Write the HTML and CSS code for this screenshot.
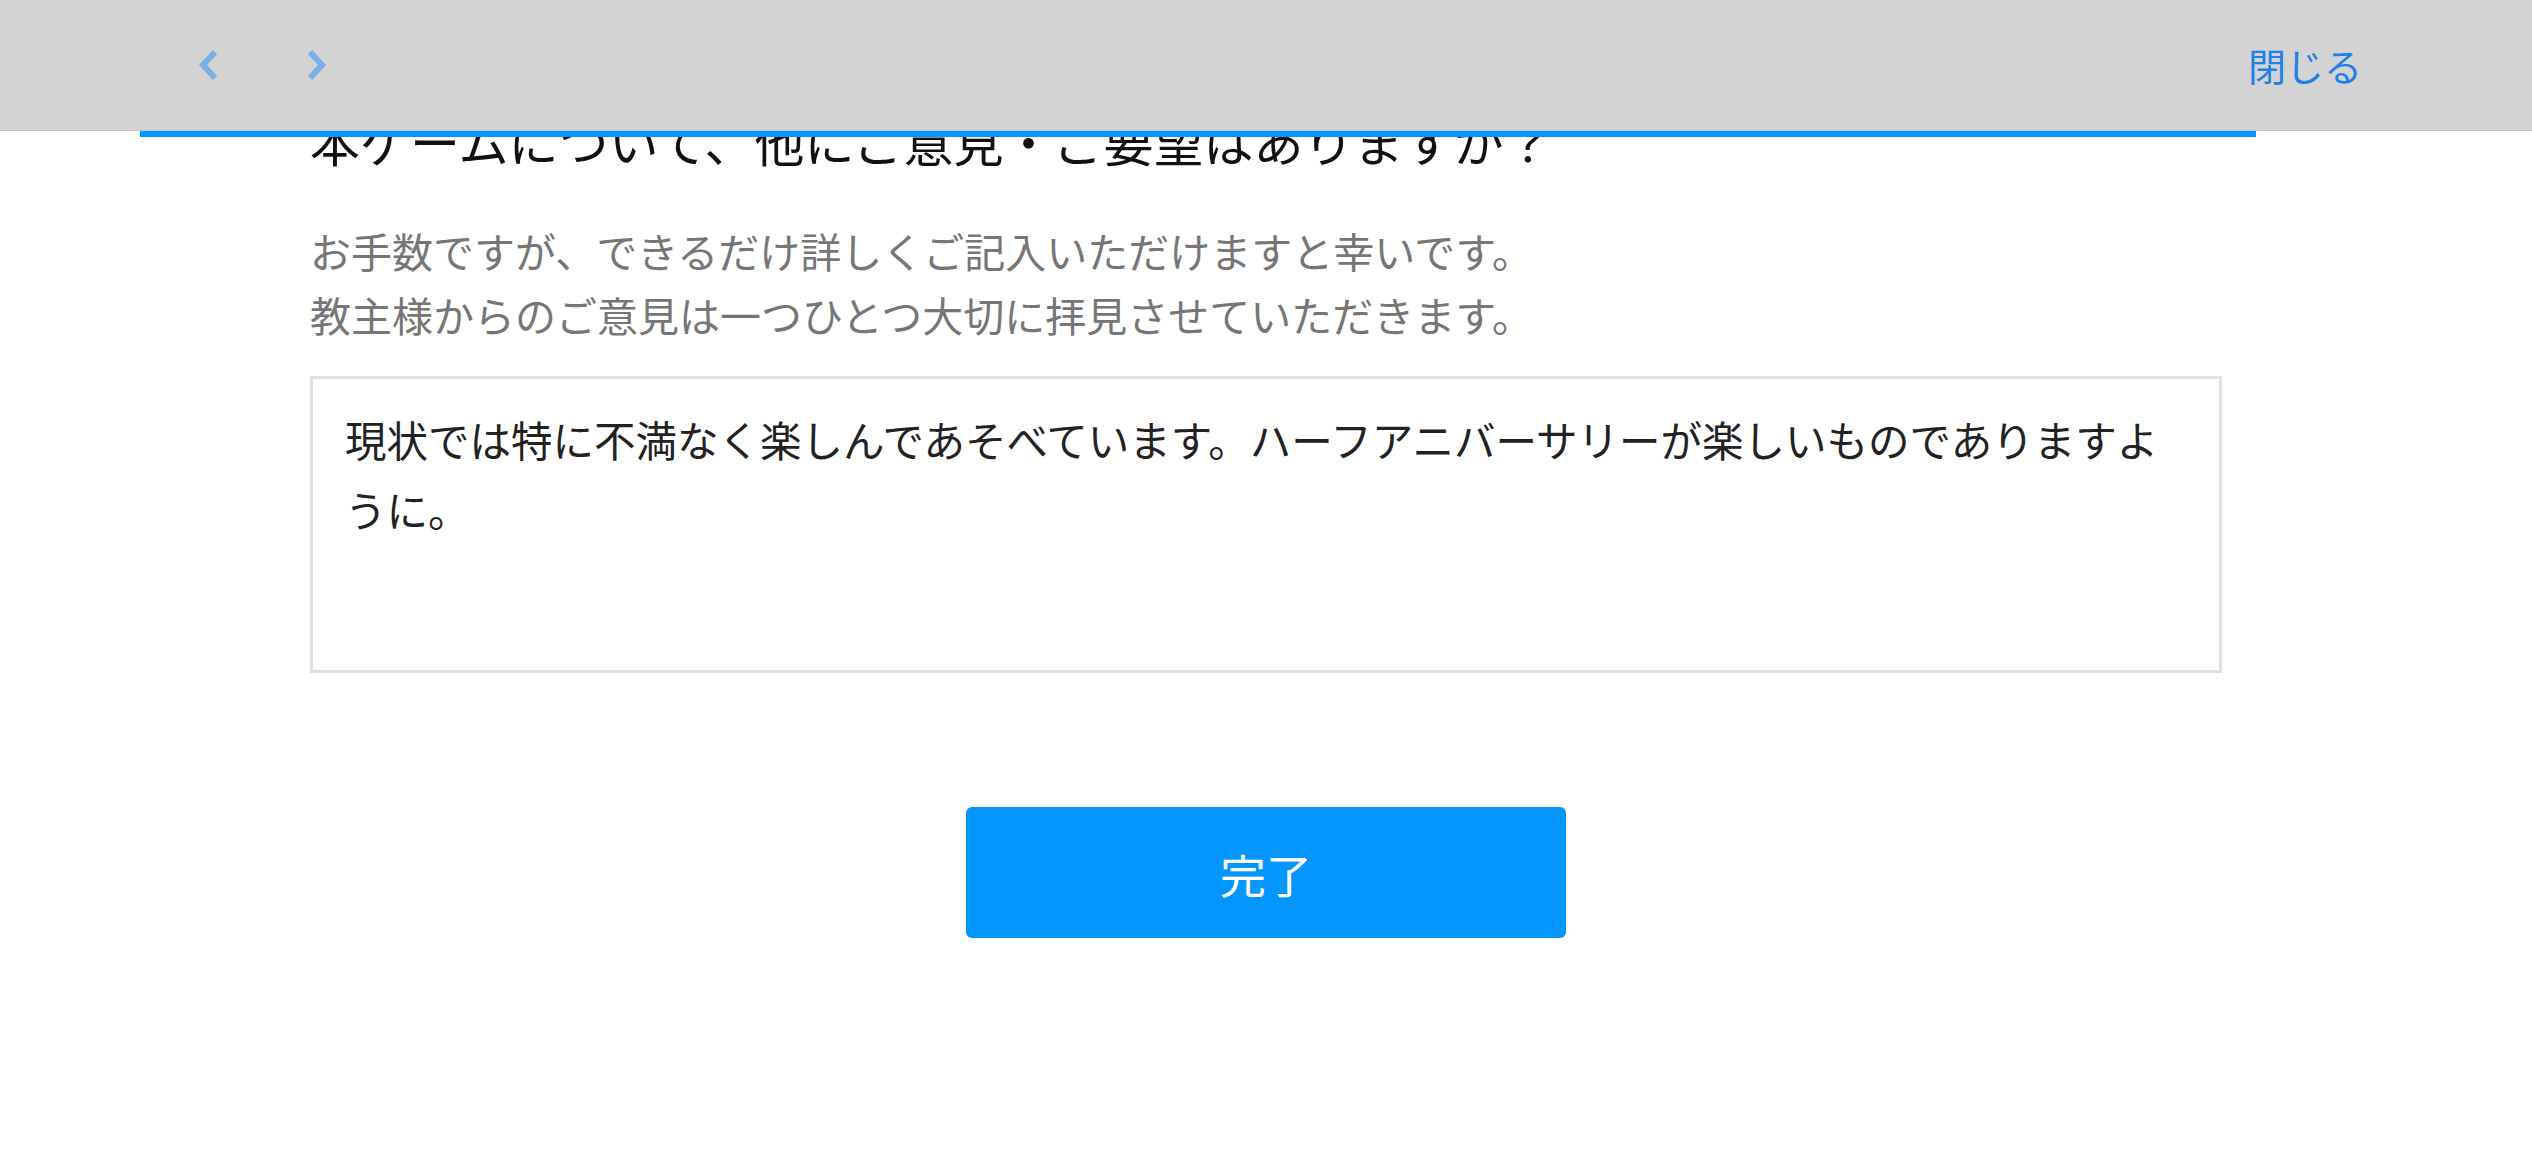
FILE: index.html
```html
<!DOCTYPE html>
<html lang="ja">
<head>
<meta charset="utf-8">
<title>アンケート</title>
<link rel="stylesheet" href="styles.css">
</head>
<body>
<main class="content">
  <h1 class="question">本ゲームについて、他にご意見・ご要望はありますか？</h1>
  <p class="note">お手数ですが、できるだけ詳しくご記入いただけますと幸いです。<br>教主様からのご意見は一つひとつ大切に拝見させていただきます。</p>
  <div class="answer">現状では特に不満なく楽しんであそべています。ハーフアニバーサリーが楽しいものでありますように。</div>
  <div class="actions">
    <button class="done" type="button">完了</button>
  </div>
</main>
<header class="topbar">
  <div class="bar">
    <nav class="nav">
      <svg class="chev" width="20" height="30" viewBox="0 0 20 30"><path d="M17 2 L5 15 L17 28" fill="none" stroke="#7bafe6" stroke-width="6"/></svg>
      <svg class="chev" width="20" height="30" viewBox="0 0 20 30"><path d="M3 2 L15 15 L3 28" fill="none" stroke="#7bafe6" stroke-width="6"/></svg>
    </nav>
    <span class="close">閉じる</span>
  </div>
  <div class="progress"><div class="progress-fill" style="width: 93.96%"></div></div>
</header>
</body>
</html>
```
FILE: styles.css
```css
html, body {
  margin: 0;
  padding: 0;
  background: #ffffff;
}
body {
  font-family: "Noto Sans CJK JP", "Noto Sans", sans-serif;
  color: #111;
}
.topbar {
  position: fixed;
  top: 0;
  left: 0;
  right: 0;
}
.bar {
  height: 131px;
  box-sizing: border-box;
  background: #d3d3d3;
  border-bottom: 1px solid #c4c4c4;
  display: flex;
  align-items: center;
  justify-content: space-between;
  padding: 0 170px 0 198px;
}
.nav {
  display: flex;
  align-items: center;
  gap: 89px;
}
.chev {
  display: block;
}
.close {
  font-size: 38px;
  color: #1e80e8;
  line-height: 1;
}
.progress {
  margin: 0 140px;
  height: 6px;
}
.progress-fill {
  height: 100%;
  background: #0396ff;
}
.content {
  width: 1912px;
  margin: 0 auto;
  padding-top: 110px;
}
.question {
  margin: 0;
  font-size: 50px;
  line-height: 60px;
  font-weight: 400;
  color: #111;
}
.note {
  margin: 48px 0 0;
  font-size: 41px;
  line-height: 64px;
  color: #767676;
}
.answer {
  margin-top: 30px;
  height: 297px;
  box-sizing: border-box;
  border: 3px solid #e0e0e0;
  padding: 25px 32px;
  font-size: 41.5px;
  line-height: 70px;
  color: #222;
}
.actions {
  display: flex;
  justify-content: center;
  margin-top: 134px;
}
.done {
  width: 600px;
  height: 131px;
  border: none;
  border-radius: 6px;
  background: #0396ff;
  color: #fff;
  font-family: "Noto Sans CJK JP", "Noto Sans", sans-serif;
  font-size: 46px;
  padding: 0;
}
```
